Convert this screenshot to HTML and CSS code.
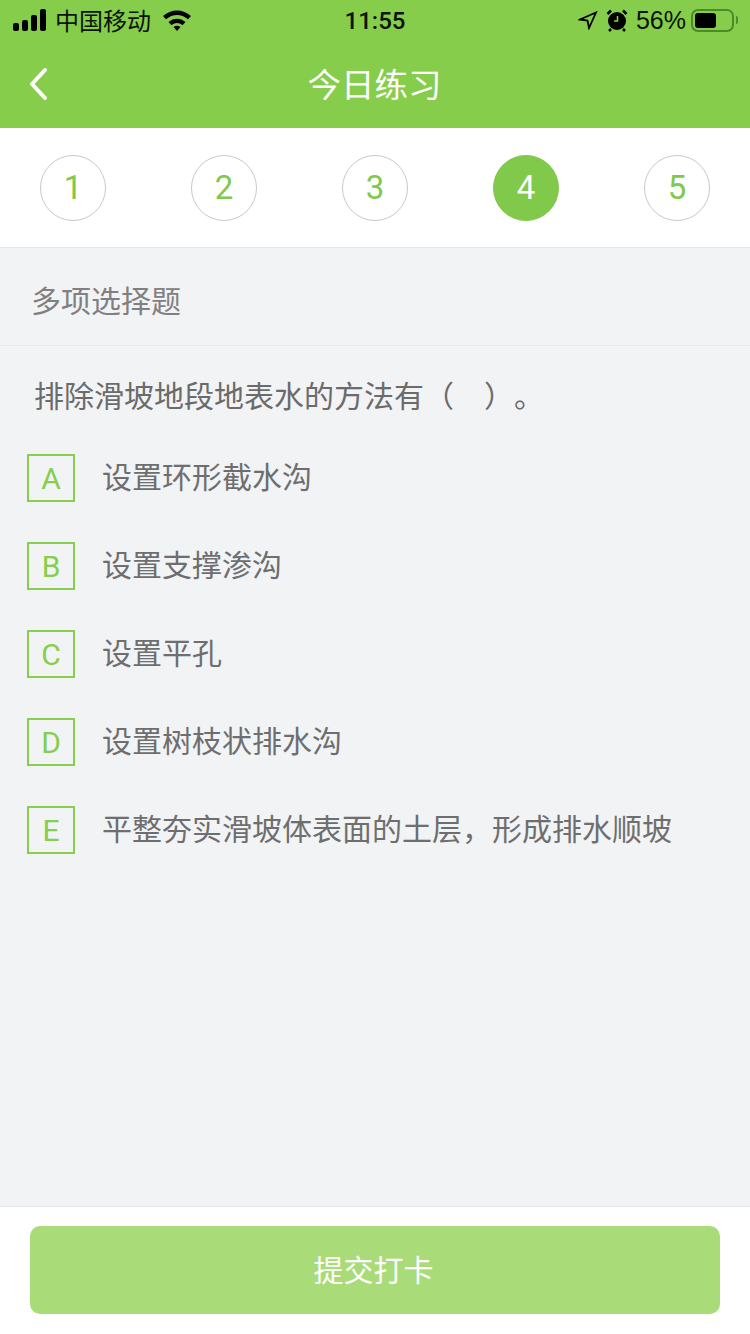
FILE: index.html
```html
<!DOCTYPE html>
<html lang="zh-CN">
<head>
  <meta charset="UTF-8" />
  <title>今日练习</title>
  <link rel="stylesheet" href="styles.css">
</head>
<body>
  <div class="page">

    <!-- green header: status bar + nav -->
    <header class="header">
      <div class="status">
        <div class="status-left">
          <svg class="signal" width="34" height="22" viewBox="0 0 34 22">
            <rect x="0" y="14" width="6" height="8" rx="2" />
            <rect x="9" y="11" width="6" height="11" rx="2" />
            <rect x="18" y="6" width="6" height="16" rx="2" />
            <rect x="27" y="0" width="6" height="22" rx="2" />
          </svg>
          <span class="carrier">中国移动</span>
          <svg class="wifi" width="30" height="22" viewBox="0 0 30 22">
            <path d="M1 7C9-.5 21-.5 29 7l-3 3.200C19.500 4.500 10.500 4.500 4 10.200z" />
            <path d="M6.500 13C11.500 8.500 18.500 8.500 23.500 13l-3 3.200C17 13.200 13 13.200 9.500 16.200z" />
            <path d="M11.500 18c2.200-1.600 4.800-1.600 7 0L15 22z" />
          </svg>
        </div>
        <div class="time">11:55</div>
        <div class="status-right">
          <svg width="20" height="20" viewBox="0 0 20 20" class="arrow">
            <path d="M2 9.500 18 2.500 11 18 9.500 10.500z" />
          </svg>
          <svg width="22" height="24" viewBox="0 0 22 24" class="alarm">
            <circle cx="11" cy="13" r="9" fill="#000" />
            <path d="M1.500 6 5 2.500M20.500 6 17 2.500M5 21l-2 2M17 21l2 2" stroke="#000" stroke-width="2.500" fill="none" />
            <path d="M11.500 8v5H8" stroke="#86ce4b" stroke-width="1.500" fill="none" />
          </svg>
          <span class="percent">56%</span>
          <div class="battery"><div class="battery-fill"></div></div>
          <div class="battery-tip"></div>
        </div>
      </div>
      <div class="nav">
        <svg class="back" width="20" height="34" viewBox="0 0 20 34">
          <path d="M16 3 3 17l13 14" />
        </svg>
        <h1 class="title">今日练习</h1>
      </div>
    </header>

    <!-- question numbers -->
    <div class="steps">
      <div class="step">1</div>
      <div class="step">2</div>
      <div class="step">3</div>
      <div class="step current">4</div>
      <div class="step">5</div>
    </div>

    <div class="type">多项选择题</div>

    <main class="question">
      <p class="stem">排除滑坡地段地表水的方法有（　）。</p>
      <ul class="options">
        <li class="option"><span class="letter">A</span><span class="label">设置环形截水沟</span></li>
        <li class="option"><span class="letter">B</span><span class="label">设置支撑渗沟</span></li>
        <li class="option"><span class="letter">C</span><span class="label">设置平孔</span></li>
        <li class="option"><span class="letter">D</span><span class="label">设置树枝状排水沟</span></li>
        <li class="option"><span class="letter">E</span><span class="label">平整夯实滑坡体表面的土层，形成排水顺坡</span></li>
      </ul>
    </main>

    <footer class="footer">
      <button type="button" class="submit">提交打卡</button>
    </footer>

  </div>
</body>
</html>
```

FILE: styles.css
```css
* {
  box-sizing: border-box;
}
html, body {
  margin: 0;
  padding: 0;
}
body {
  font-family: "Liberation Sans", "Noto Sans CJK SC", sans-serif;
  background: #f2f3f5;
}
.page {
  width: 750px;
  height: 1334px;
  display: flex;
  flex-direction: column;
  overflow: hidden;
}

/* header */
.header {
  height: 128px;
  background: #87cd4c;
}
.status {
  height: 40px;
  padding: 0 12px 0 13px;
  display: grid;
  grid-template-columns: 1fr auto 1fr;
  align-items: center;
  color: #0a1405;
}
.status-left {
  display: flex;
  align-items: center;
}
.signal, .wifi {
  fill: #000;
}
.carrier {
  margin-left: 8px;
  margin-top: -2px;
  font-size: 24px;
}
.wifi {
  margin-left: 11px;
}
.time {
  font-family: Roboto, "Liberation Sans", sans-serif;
  font-size: 24px;
  font-weight: 500;
  padding: 2px 1px 0 0;
}
.status-right {
  display: flex;
  align-items: center;
  justify-content: flex-end;
}
.arrow {
  fill: none;
  stroke: #000;
  stroke-width: 1.800;
  margin-right: 8px;
}
.alarm {
  margin-right: 8px;
}
.percent {
  font-size: 25px;
  margin-right: 5px;
}
.battery {
  width: 43px;
  height: 23px;
  padding: 2px;
  border: 2px solid #4f8a28;
  border-radius: 7px;
}
.battery-fill {
  width: 21px;
  height: 100%;
  background: #000;
  border-radius: 3px;
}
.battery-tip {
  width: 2px;
  height: 8px;
  margin-left: 2px;
  background: #4f8a28;
  border-radius: 0 2px 2px 0;
}
.nav {
  height: 88px;
  position: relative;
  display: flex;
  align-items: center;
  justify-content: center;
}
.back {
  position: absolute;
  left: 29px;
  top: 27px;
  fill: none;
  stroke: #fff;
  stroke-width: 4;
  stroke-linecap: round;
  stroke-linejoin: round;
}
.title {
  margin: 0 0 4px -1px;
  font-size: 33.500px;
  font-weight: 400;
  color: #fff;
}

/* number row */
.steps {
  height: 120px;
  padding: 0 40px;
  background: #fff;
  border-bottom: 1px solid #e6e7e9;
  display: flex;
  justify-content: space-between;
  align-items: center;
}
.step {
  width: 66px;
  height: 66px;
  border: 1px solid #c9c9c9;
  border-radius: 50%;
  display: flex;
  align-items: center;
  justify-content: center;
  font-family: Roboto, "Liberation Sans", sans-serif;
  font-size: 33px;
  color: #80c94b;
}
.step.current {
  background: #80c94b;
  border-color: #80c94b;
  color: #fff;
}

.type {
  height: 98px;
  padding: 4px 0 0 31px;
  border-bottom: 1px solid #e6e7e9;
  display: flex;
  align-items: center;
  font-size: 30px;
  color: #808080;
}

/* question */
.question {
  flex: 1;
  padding: 0 27px;
}
.stem {
  margin: 31px 0 0 7px;
  font-size: 30px;
  line-height: 40px;
  color: #6b6b6b;
  text-spacing-trim: space-all;
}
.options {
  list-style: none;
  margin: 37px 0 0;
  padding: 0;
  display: flex;
  flex-direction: column;
  gap: 40px;
}
.option {
  display: flex;
  align-items: center;
  height: 48px;
}
.letter {
  width: 48px;
  height: 48px;
  border: 2px solid #86ce4b;
  display: flex;
  align-items: center;
  justify-content: center;
  font-family: Roboto, "Liberation Sans", sans-serif;
  font-size: 30px;
  color: #86ce4b;
}
.label {
  margin-left: 27px;
  padding-bottom: 6px;
  font-size: 30px;
  color: #6e6e6e;
}

/* submit */
.footer {
  height: 128px;
  padding: 19px 30px 0;
  background: #fff;
  border-top: 1px solid #e6e7e9;
}
.submit {
  width: 100%;
  height: 88px;
  padding: 0 3px 4px 0;
  border: 0;
  border-radius: 10px;
  background: #a9dc79;
  color: #fff;
  font-family: inherit;
  font-size: 30px;
}
```
